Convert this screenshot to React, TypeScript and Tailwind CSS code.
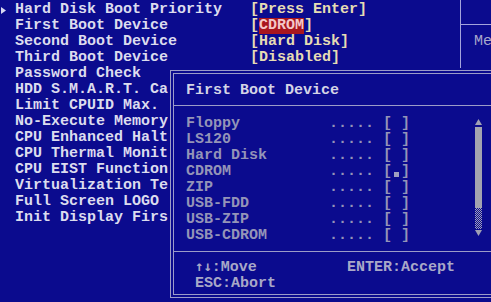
import React from "react";

const rows: { label: string; value?: string; highlight?: boolean }[] = [
  { label: "Hard Disk Boot Priority", value: "[Press Enter]" },
  { label: "First Boot Device", value: "CDROM", highlight: true },
  { label: "Second Boot Device", value: "[Hard Disk]" },
  { label: "Third Boot Device", value: "[Disabled]" },
  { label: "Password Check" },
  { label: "HDD S.M.A.R.T. Ca" },
  { label: "Limit CPUID Max." },
  { label: "No-Execute Memory" },
  { label: "CPU Enhanced Halt" },
  { label: "CPU Thermal Monit" },
  { label: "CPU EIST Function" },
  { label: "Virtualization Te" },
  { label: "Full Screen LOGO" },
  { label: "Init Display Firs" },
];

const devices = [
  "Floppy",
  "LS120",
  "Hard Disk",
  "CDROM",
  "ZIP",
  "USB-FDD",
  "USB-ZIP",
  "USB-CDROM",
];

export default function App() {
  return (
    <div className="relative w-[491px] h-[302px] overflow-hidden bg-[#0b0b8e] font-['Liberation_Mono',monospace] text-[15px] leading-[16px] font-bold">
      <div className="flex h-full">
        {/* left setup list */}
        <div className="w-[460px] shrink-0 pt-[2px] flex flex-col">
          {rows.map((r, i) => (
            <div key={i} className="flex h-[16px] whitespace-pre">
              <div className="w-[15px] shrink-0 flex items-center pt-[1px]">
                {i === 0 && (
                  <svg width="6" height="7" viewBox="0 0 6 7" className="ml-[1px]">
                    <path d="M0 0 L5 3.5 L0 7 Z" fill="#d8d8f0" />
                  </svg>
                )}
              </div>
              <div
                className={
                  i >= 4
                    ? "w-[153px] shrink-0 overflow-hidden text-[#dcdcee]"
                    : "w-[235px] shrink-0 overflow-hidden text-[#dcdcee]"
                }
              >
                {r.label}
              </div>
              {r.value &&
                (r.highlight ? (
                  <div className="text-[#e6dcb4]">
                    [<span className="bg-[#a8161e] text-[#f4c8c8] inline-block">{r.value}</span>]
                  </div>
                ) : (
                  <div className="text-[#e6dcb4]">{r.value}</div>
                ))}
            </div>
          ))}
        </div>
        {/* right help panel */}
        <div className="w-[31px] shrink-0 h-[70px] border-l border-[#a4a4dc] flex flex-col overflow-hidden">
          <div className="h-[25px] shrink-0 border-b border-[#a4a4dc]" />
          <div className="pt-[9px] pl-[13px] whitespace-pre font-normal text-[#a8a8cc]">Me</div>
        </div>
      </div>

      {/* popup */}
      <div className="absolute left-[170px] top-[70px] w-[340px] h-[228px] border border-[#9c9cc8] p-[2px] bg-[#0b0b8e] shadow-[0_0_0_2px_#0b0b8e]">
        <div className="h-full border border-[#9c9cc8] flex flex-col">
          <div className="h-[31px] shrink-0 flex items-center pt-[2px] pl-[12px] text-[#d4d4e6]">First Boot Device</div>
          <div className="h-px shrink-0 bg-[#9c9cc8]" />
          <div className="flex pt-[8px] pb-[7px]">
            <div className="w-[301px] pl-[12px] pt-[2px] flex flex-col text-[#9494b8]">
              {devices.map((d) => (
                <div key={d} className="h-[16px] whitespace-pre flex">
                  <span className="w-[143px]">{d}</span>
                  <span>{"..... ["}</span>
                  <span className="w-[9px] flex items-center justify-center pt-[4px]">
                    {d === "CDROM" && <span className="w-[5px] h-[5px] bg-[#a0a0c0] inline-block" />}
                  </span>
                  <span>]</span>
                </div>
              ))}
            </div>
            <div className="w-[7px] flex flex-col items-center pt-[5px]">
              <svg width="7" height="6" viewBox="0 0 7 6">
                <path d="M3.5 0 L7 6 L0 6 Z" fill="#a0a0b4" />
              </svg>
              <div className="mt-[2px] w-[7px] h-[81px] bg-[#a4a4b0]" />
              <div className="w-[7px] h-[21px] bg-[repeating-conic-gradient(#a0a0b8_0%_25%,transparent_0%_50%)] bg-[length:2px_2px]" />
              <svg width="7" height="6" viewBox="0 0 7 6" className="mt-[1px]">
                <path d="M0 0 L7 0 L3.5 6 Z" fill="#a0a0b4" />
              </svg>
            </div>
          </div>
          <div className="h-px shrink-0 bg-[#9c9cc8]" />
          <div className="pt-[8px] pl-[21px] flex flex-col text-[#a8a8c8]">
            <div className="h-[16px] whitespace-pre">
              <span className="font-['DejaVu_Sans_Mono',monospace] text-[14px] leading-[0]">↑↓</span>
              {":Move          ENTER:Accept"}
            </div>
            <div className="h-[16px] whitespace-pre">ESC:Abort</div>
          </div>
        </div>
      </div>
    </div>
  );
}
